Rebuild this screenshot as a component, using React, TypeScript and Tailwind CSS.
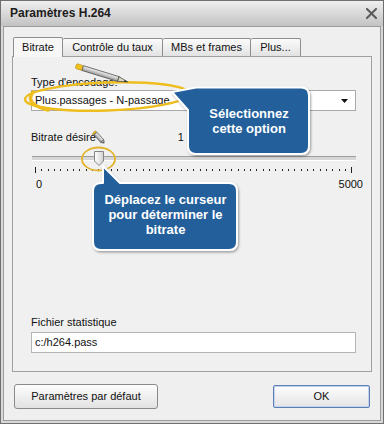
import React from "react";

const ticks = Array.from({ length: 51 }, (_, i) => i);

function Pencil({ x, y, angle, len, w }: { x: number; y: number; angle: number; len: number; w: number }) {
  const h = w / 2;
  const cap = len * 0.13;
  const tip = len * 0.18;
  return (
    <g transform={`translate(${x} ${y}) rotate(${angle})`}>
      <rect x={0} y={-h} width={cap} height={w} rx={1} fill="#f1c21b" stroke="#b48a10" strokeWidth={0.6} />
      <rect x={cap} y={-h} width={len - cap - tip} height={w} fill="url(#pencilBody)" stroke="#4a4a4a" strokeWidth={0.7} />
      <polygon points={`${len - tip},${-h} ${len},0 ${len - tip},${h}`} fill="#d9d2bf" stroke="#4a4a4a" strokeWidth={0.7} />
      <polygon points={`${len - tip * 0.35},${-h * 0.35} ${len},0 ${len - tip * 0.35},${h * 0.35}`} fill="#222" />
    </g>
  );
}

export default function App() {
  return (
    <div className="relative h-[424px] w-[384px] overflow-hidden select-none font-['Liberation_Sans',Arial,sans-serif] text-[11px] leading-[13px] text-[#111]">
      <div className="flex h-full flex-col border border-[#6f6f6f] bg-[#d8d8d8]">
        {/* Title bar */}
        <div className="flex h-[25px] shrink-0 items-center justify-between bg-gradient-to-b from-[#efefef] to-[#c3c3c3] pl-[9px] pr-[6px]">
          <span className="text-[12px] font-bold text-[#1c1c1c]">Paramètres H.264</span>
          <svg width="11" height="11" viewBox="0 0 11 11">
            <path d="M1 1 L10 10 M10 1 L1 10" stroke="#5b5b5b" strokeWidth="2" strokeLinecap="square" />
          </svg>
        </div>

        {/* Body */}
        <div className="mx-[2px] mb-[2px] flex flex-1 flex-col border border-[#9b9b9b] bg-[#efefef]">
          {/* Tabs */}
          <div className="relative z-10 ml-[9px] mt-[10px] flex h-[20px] items-end">
            <div className="flex h-[20px] w-[50px] items-center justify-center rounded-t-[2px] border border-b-0 border-[#8e8e8e] bg-[#f7f7f7]">
              Bitrate
            </div>
            <div className="mb-[1px] flex h-[18px] w-[100px] items-center justify-center rounded-t-[2px] border border-b-0 border-l-0 border-[#8e8e8e] bg-gradient-to-b from-[#fbfbfb] to-[#e2e2e2]">
              Contrôle du taux
            </div>
            <div className="mb-[1px] flex h-[18px] w-[88px] items-center justify-center rounded-t-[2px] border border-b-0 border-l-0 border-[#8e8e8e] bg-gradient-to-b from-[#fbfbfb] to-[#e2e2e2]">
              MBs et frames
            </div>
            <div className="mb-[1px] flex h-[18px] w-[50px] items-center justify-center rounded-t-[2px] border border-b-0 border-l-0 border-[#8e8e8e] bg-gradient-to-b from-[#fbfbfb] to-[#e2e2e2]">
              Plus...
            </div>
          </div>

          {/* Panel */}
          <div className="-mt-px ml-[8px] flex h-[316px] w-[360px] flex-col border border-[#a0a0a0] bg-[#f0f0f0] pl-[18px] pr-[15px]">
            <div className="mt-[19px]">Type d'encodage:</div>
            <div className="mt-[1px] flex h-[21px] items-center justify-between border border-[#a9a9a9] bg-white pl-[3px] pr-[7px]">
              <span>Plus.passages - N-passage</span>
              <svg width="7" height="4" viewBox="0 0 7 4">
                <path d="M0 0 H7 L3.5 4 Z" fill="#111" />
              </svg>
            </div>

            <div className="mt-[20px] flex">
              <span>Bitrate désiré</span>
              <span className="ml-[82px]">1</span>
            </div>

            {/* Slider */}
            <div className="relative mt-[6px] h-[16px]">
              <div className="absolute left-[1px] top-[6px] h-[5px] w-[324px] border-b border-t border-b-white border-t-[#9d9d9d] bg-[#d6d6d6]" />
              <svg className="absolute left-[63px] top-[1px]" width="10" height="15" viewBox="0 0 10 15">
                <defs>
                  <linearGradient id="thumb" x1="0" x2="1" y1="0" y2="0">
                    <stop offset="0" stopColor="#ffffff" />
                    <stop offset="1" stopColor="#d2d2d2" />
                  </linearGradient>
                </defs>
                <path d="M0.5 0.5 H9.5 V10 L5 14.5 L0.5 10 Z" fill="url(#thumb)" stroke="#858585" />
              </svg>
            </div>
            <div className="ml-[4px] mt-[1px] flex h-[6px] w-[318px] items-start justify-between">
              {ticks.map((i) => (
                <div key={i} className={i === 0 || i === 50 ? "h-[6px] w-px bg-[#222]" : "mt-[2px] h-[2px] w-px bg-[#222]"} />
              ))}
            </div>
            <div className="-mr-[7px] ml-[5px] mt-[5px] flex justify-between">
              <span>0</span>
              <span>5000</span>
            </div>

            <div className="mt-[125px]">Fichier statistique</div>
            <div className="mt-[3px] flex h-[21px] items-center border border-[#b5b5b5] bg-white pl-[3px]">c:/h264.pass</div>
          </div>

          {/* Buttons */}
          <div className="ml-[10px] mr-[10px] mt-[12px] flex items-center justify-between">
            <div className="flex h-[25px] w-[144px] items-center justify-center rounded-[3px] border border-[#8a8a8a] bg-gradient-to-b from-[#fdfdfd] to-[#e2e2e2]">
              Paramètres par défaut
            </div>
            <div className="flex h-[23px] w-[97px] items-center justify-center rounded-[2px] border border-[#5d7db5] bg-gradient-to-b from-[#fdfdfd] to-[#e4e4e4] shadow-[inset_0_0_0_1px_#c3d3ee]">
              OK
            </div>
          </div>
        </div>
      </div>

      {/* Annotations overlay */}
      <svg className="pointer-events-none absolute left-0 top-0" width="384" height="424" viewBox="0 0 384 424">
        <defs>
          <linearGradient id="pencilBody" x1="0" x2="0" y1="0" y2="1">
            <stop offset="0" stopColor="#f4f4f4" />
            <stop offset="1" stopColor="#9a9a9a" />
          </linearGradient>
          <filter id="sh" x="-10%" y="-10%" width="130%" height="130%">
            <feDropShadow dx="1" dy="1.5" stdDeviation="1.2" floodColor="#000" floodOpacity="0.35" />
          </filter>
        </defs>

        <ellipse cx="107" cy="96.5" rx="82" ry="14" fill="none" stroke="#eebd1e" strokeWidth="2.5" transform="rotate(-2 107 96.5)" />
        <path d="M33 92 Q24 104 48 110" fill="none" stroke="#eebd1e" strokeWidth="3.5" strokeLinecap="round" />
        <ellipse cx="98.5" cy="159" rx="16.5" ry="11.5" fill="none" stroke="#e3b42a" strokeWidth="1.8" />

        <Pencil x={76} y={66} angle={17.1} len={54} w={5} />
        <Pencil x={94} y={132} angle={47.7} len={15} w={4} />

        <path
          d="M172 92 L196 87.5 H301 Q309 87.5 309 95.5 V146 Q309 154 301 154 H196 Q188 154 188 146 V110 Z"
          fill="#235f9b"
          stroke="#ffffff"
          strokeWidth="2"
          strokeLinejoin="round"
          filter="url(#sh)"
        />
        <path
          d="M103 166 L120 183 H229 Q237 183 237 191 V242 Q237 250 229 250 H101 Q93 250 93 242 V191 Q93 183 101 183 H103 Z"
          fill="#235f9b"
          stroke="#ffffff"
          strokeWidth="2"
          strokeLinejoin="round"
          filter="url(#sh)"
        />
      </svg>

      <div className="pointer-events-none absolute left-[188px] top-[106px] w-[122px] text-center text-[13px] font-bold leading-[15px] text-white">
        Sélectionnez
        <br />
        cette option
      </div>
      <div className="pointer-events-none absolute left-[93px] top-[192px] w-[145px] text-center text-[13px] font-bold leading-[15px] text-white">
        Déplacez le curseur
        <br />
        pour déterminer le
        <br />
        bitrate
      </div>
    </div>
  );
}
